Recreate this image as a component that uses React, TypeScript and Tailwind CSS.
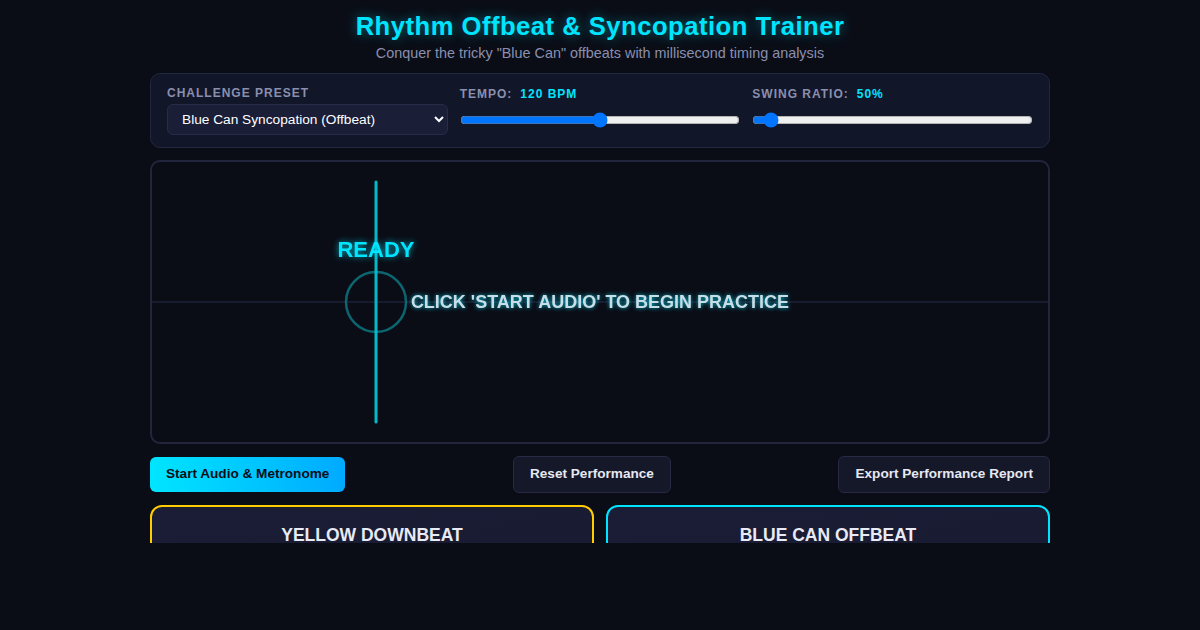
import { useState } from 'react'

const font = { fontFamily: '"Liberation Sans", Arial, sans-serif' }

function Label({ title, value }: { title: string; value?: string }) {
  return (
    <div className="flex items-center gap-2 text-[12px] font-bold uppercase tracking-[1px] leading-[14px]">
      <span className="text-[#8a8fad]">{title}</span>
      {value && <span className="text-[#00e5ff]">{value}</span>}
    </div>
  )
}

function PracticeCanvas() {
  return (
    <div className="relative h-[284px] rounded-[10px] border-2 border-[#22263d] bg-[#0a0d16] overflow-hidden">
      <svg width="896" height="280" viewBox="0 0 896 280" className="block">
        <line x1="0" y1="140" x2="896" y2="140" stroke="#1e2238" strokeWidth="1.5" />
        <circle cx="224" cy="140" r="30" fill="none" stroke="#0b6670" strokeWidth="2.5" />
        <line x1="224" y1="20" x2="224" y2="260" stroke="#00b9c9" strokeWidth="3" strokeLinecap="round" />
        <text
          x="224"
          y="95"
          textAnchor="middle"
          fill="#00e5ff"
          fontSize="22"
          fontWeight="700"
          fontFamily='"Liberation Sans", Arial, sans-serif'
          style={{ filter: 'drop-shadow(0 0 3px rgba(0,229,255,0.7))' }}
        >
          READY
        </text>
        <text
          x="448"
          y="146"
          textAnchor="middle"
          fill="#c9dde6"
          fontSize="18"
          fontWeight="700"
          fontFamily='"Liberation Sans", Arial, sans-serif'
          style={{ filter: 'drop-shadow(0 0 2px rgba(0,229,255,0.8))' }}
        >
          CLICK &apos;START AUDIO&apos; TO BEGIN PRACTICE
        </text>
      </svg>
    </div>
  )
}

export default function App() {
  const [preset, setPreset] = useState('blue')
  const [tempo, setTempo] = useState(120)
  const [swing, setSwing] = useState(50)

  return (
    <div className="min-h-screen bg-[#0a0d16]" style={font}>
      <div className="h-[543px] overflow-hidden">
        <div className="mx-auto w-[900px] pt-[10px]">
          <header className="text-center">
            <h1 className="text-[25.6px] leading-[32px] font-bold tracking-[0.5px] text-[#00e5ff] [text-shadow:0_0_12px_rgba(0,229,255,0.45)]">
              Rhythm Offbeat &amp; Syncopation Trainer
            </h1>
            <p className="mt-[2px] text-[14.4px] leading-[18px] text-[#8a8fb0]">
              Conquer the tricky &quot;Blue Can&quot; offbeats with millisecond timing analysis
            </p>
          </header>

          <section className="mt-[11px] grid grid-cols-3 gap-3 rounded-[10px] border border-[#22263f] bg-[#121629] px-4 pt-[12px] pb-3">
            <div className="flex flex-col gap-[4px]">
              <Label title="Challenge Preset" />
              <select
                value={preset}
                onChange={(e) => setPreset(e.target.value)}
                className="h-[31px] rounded-[6px] border border-[#272c4a] bg-[#1a1e37] px-[10px] text-[13.7px] text-white outline-none"
                style={font}
              >
                <option value="blue">Blue Can Syncopation (Offbeat)</option>
                <option value="yellow">Yellow Downbeat Basics</option>
              </select>
            </div>
            <div className="flex flex-col gap-[11px] pt-[1px]">
              <Label title="Tempo:" value={`${tempo} BPM`} />
              <input
                type="range"
                min={40}
                max={200}
                value={tempo}
                onChange={(e) => setTempo(Number(e.target.value))}
                className="w-full"
              />
            </div>
            <div className="flex flex-col gap-[11px] pt-[1px]">
              <Label title="Swing Ratio:" value={`${swing}%`} />
              <input
                type="range"
                min={46}
                max={150}
                value={swing}
                onChange={(e) => setSwing(Number(e.target.value))}
                className="w-full"
              />
            </div>
          </section>

          <div className="mt-3">
            <PracticeCanvas />
          </div>

          <div className="mt-[12px] flex items-center justify-between">
            <button className="h-[35px] rounded-[6px] bg-gradient-to-r from-[#00e5ff] to-[#00aaff] px-4 text-[13.6px] font-bold text-[#0a0d16]">
              Start Audio &amp; Metronome
            </button>
            <button className="h-[37px] rounded-[6px] border border-[#262a45] bg-[#141829] px-4 text-[13.6px] font-bold text-[#e6e8f2]">
              Reset Performance
            </button>
            <button className="h-[37px] rounded-[6px] border border-[#262a45] bg-[#141829] px-4 text-[13.6px] font-bold text-[#e6e8f2]">
              Export Performance Report
            </button>
          </div>

          <div className="mt-3 grid grid-cols-2 gap-3">
            <div className="h-[120px] rounded-[12px] border-2 border-[#ffcc00] bg-gradient-to-br from-[#1a1d35] to-[#171a30] pt-[20px] text-center">
              <h2 className="text-[17.5px] leading-[16px] font-bold text-[#e8eaf5]">YELLOW DOWNBEAT</h2>
            </div>
            <div className="h-[120px] rounded-[12px] border-2 border-[#00e5ff] bg-gradient-to-br from-[#1a1d35] to-[#171a30] pt-[20px] text-center">
              <h2 className="text-[17.5px] leading-[16px] font-bold text-[#e8eaf5]">BLUE CAN OFFBEAT</h2>
            </div>
          </div>
        </div>
      </div>
    </div>
  )
}
